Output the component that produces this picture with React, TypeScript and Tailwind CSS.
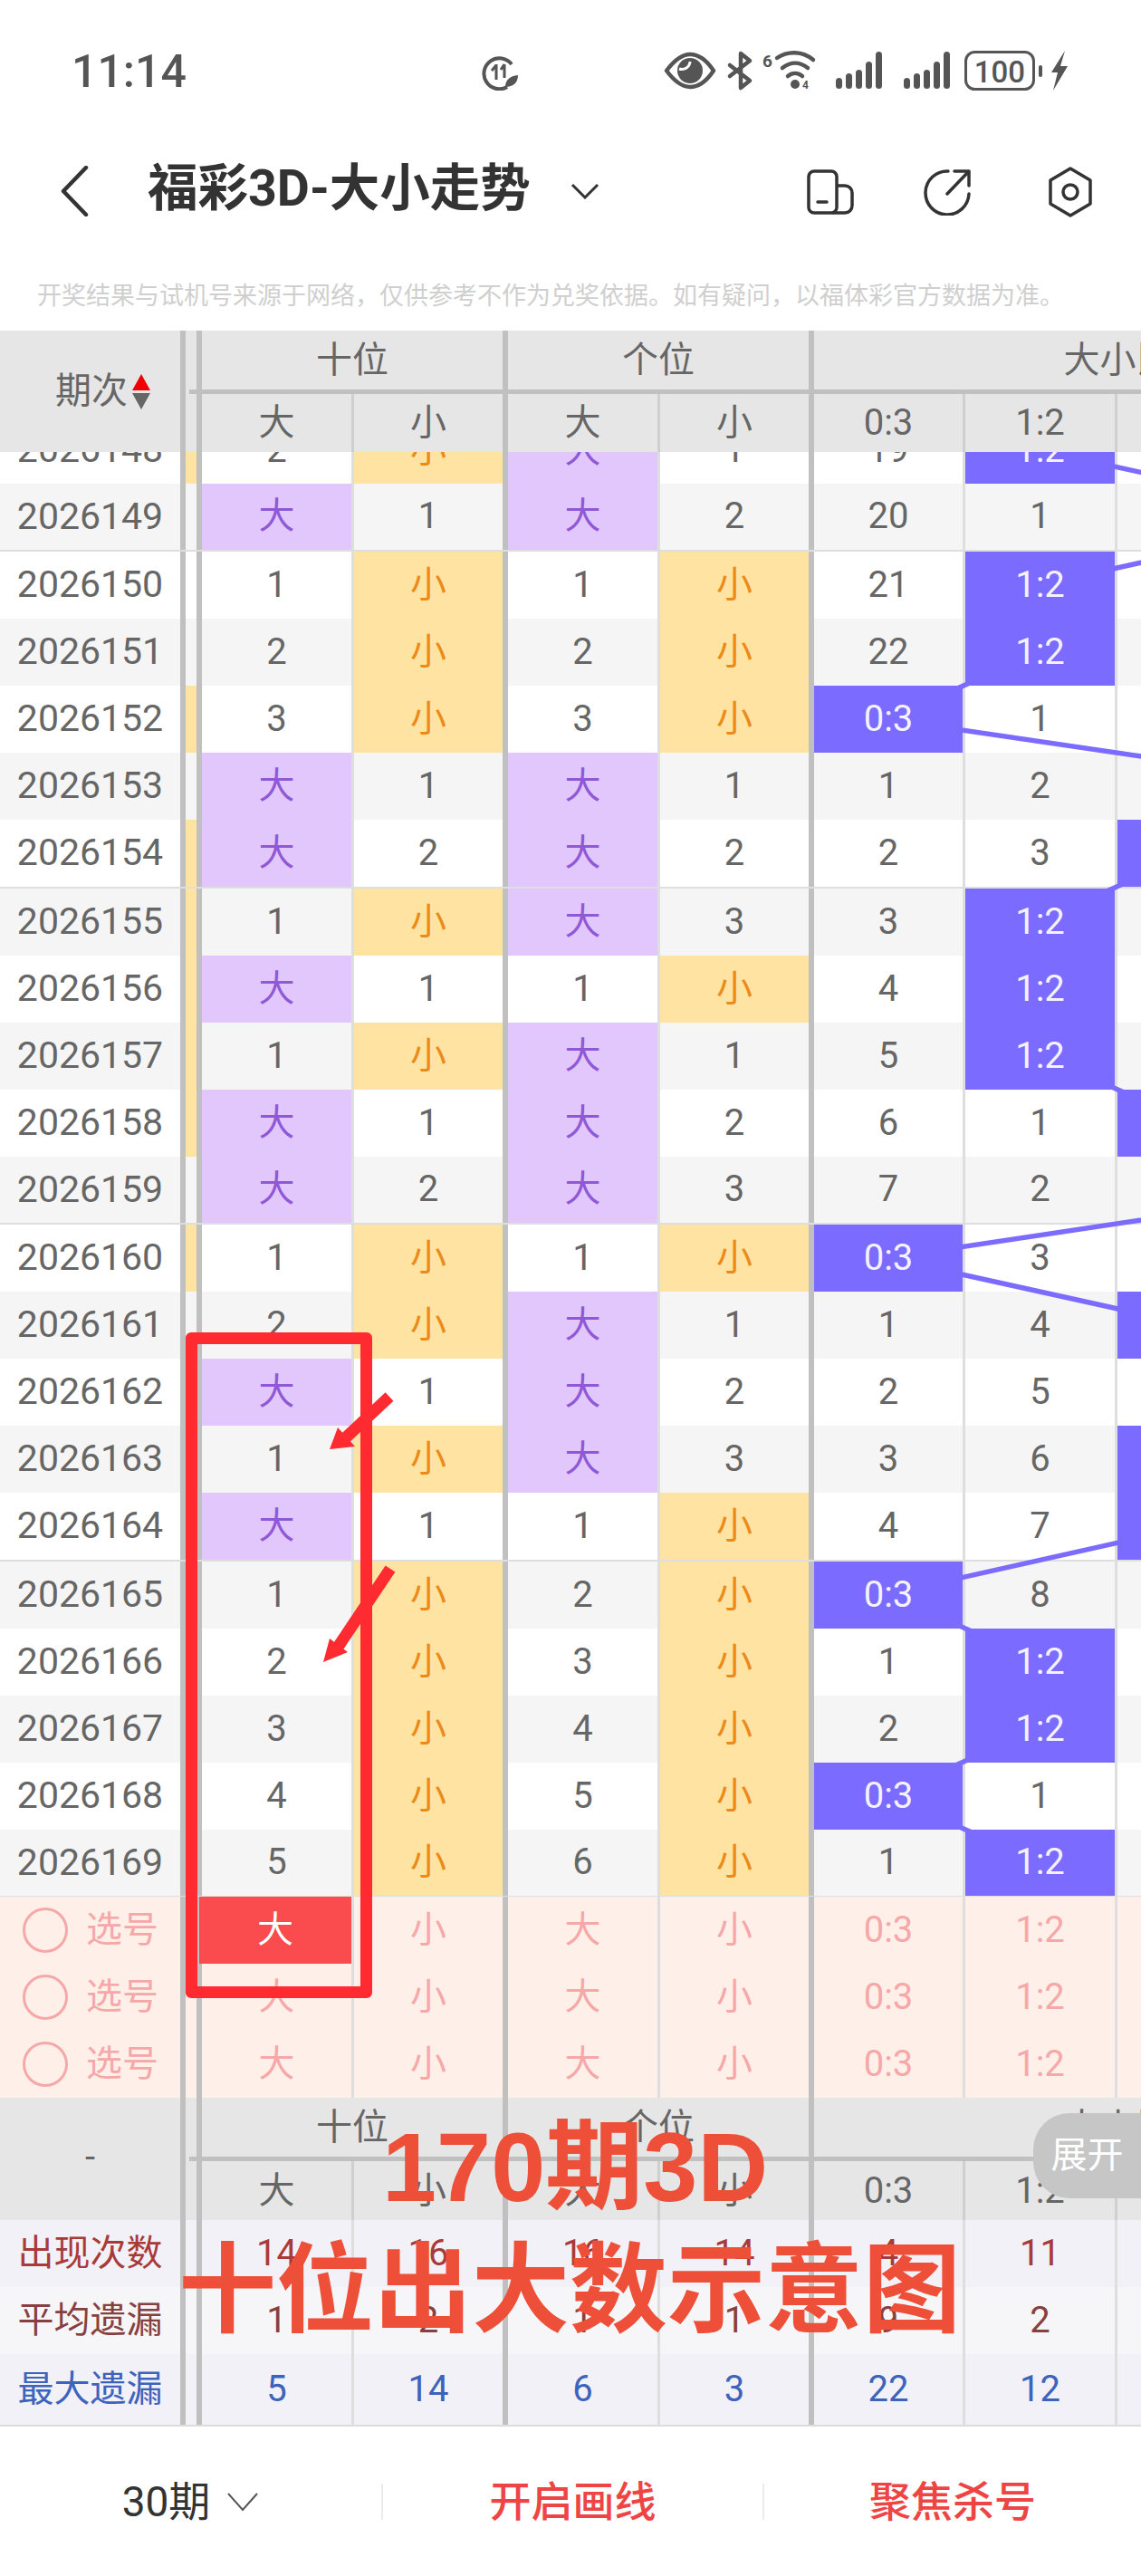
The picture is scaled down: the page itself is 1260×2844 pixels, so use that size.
import React from "react";

const ROBOTO = "font-['Roboto','Noto_Sans_CJK_SC',sans-serif]";

type Row = { id: number; strip: boolean; s: [string, string, string, string]; a: string; b: string; c: boolean };

const rows: Row[] = [
  { id: 2026148, strip: true, s: ["2", "小", "大", "1"], a: "19", b: "1:2", c: false },
  { id: 2026149, strip: false, s: ["大", "1", "大", "2"], a: "20", b: "1", c: false },
  { id: 2026150, strip: false, s: ["1", "小", "1", "小"], a: "21", b: "1:2", c: false },
  { id: 2026151, strip: false, s: ["2", "小", "2", "小"], a: "22", b: "1:2", c: false },
  { id: 2026152, strip: true, s: ["3", "小", "3", "小"], a: "0:3", b: "1", c: false },
  { id: 2026153, strip: false, s: ["大", "1", "大", "1"], a: "1", b: "2", c: false },
  { id: 2026154, strip: true, s: ["大", "2", "大", "2"], a: "2", b: "3", c: true },
  { id: 2026155, strip: true, s: ["1", "小", "大", "3"], a: "3", b: "1:2", c: false },
  { id: 2026156, strip: true, s: ["大", "1", "1", "小"], a: "4", b: "1:2", c: false },
  { id: 2026157, strip: true, s: ["1", "小", "大", "1"], a: "5", b: "1:2", c: false },
  { id: 2026158, strip: true, s: ["大", "1", "大", "2"], a: "6", b: "1", c: true },
  { id: 2026159, strip: false, s: ["大", "2", "大", "3"], a: "7", b: "2", c: false },
  { id: 2026160, strip: true, s: ["1", "小", "1", "小"], a: "0:3", b: "3", c: false },
  { id: 2026161, strip: false, s: ["2", "小", "大", "1"], a: "1", b: "4", c: true },
  { id: 2026162, strip: false, s: ["大", "1", "大", "2"], a: "2", b: "5", c: false },
  { id: 2026163, strip: false, s: ["1", "小", "大", "3"], a: "3", b: "6", c: true },
  { id: 2026164, strip: false, s: ["大", "1", "1", "小"], a: "4", b: "7", c: true },
  { id: 2026165, strip: false, s: ["1", "小", "2", "小"], a: "0:3", b: "8", c: false },
  { id: 2026166, strip: false, s: ["2", "小", "3", "小"], a: "1", b: "1:2", c: false },
  { id: 2026167, strip: false, s: ["3", "小", "4", "小"], a: "2", b: "1:2", c: false },
  { id: 2026168, strip: false, s: ["4", "小", "5", "小"], a: "0:3", b: "1", c: false },
  { id: 2026169, strip: false, s: ["5", "小", "6", "小"], a: "1", b: "1:2", c: false },
];

function Cell({ v, w }: { v: string; w: string }) {
  let cls = "text-[#666666]";
  if (v === "大") cls = "bg-[#E1C7FC] text-[#8E58D6]";
  if (v === "小") cls = "bg-[#FFE3A3] text-[#EC8A18]";
  if (v === "0:3" || v === "1:2") cls = "relative z-10 bg-[#7B6CFF] text-[#F4F2FF]";
  return <div className={`flex h-full shrink-0 items-center justify-center ${w} ${cls}`}>{v}</div>;
}

function VThick() {
  return <div className="h-full w-[6px] shrink-0 bg-[#C0C0C0]" />;
}
function VThin({ c = "bg-[#DEDEDE]" }: { c?: string }) {
  return <div className={`h-full w-[3px] shrink-0 ${c}`} />;
}

function Frozen({ strip }: { strip?: string }) {
  return (
    <>
      <VThick />
      <div className={`h-full w-[12px] shrink-0 ${strip ?? ""}`} />
      <VThick />
    </>
  );
}

function DataRow({ r, i }: { r: Row; i: number }) {
  const gray = r.id % 2 === 1;
  const groupEnd = r.id % 5 === 4;
  return (
    <div
      className={`flex w-[1600px] shrink-0 text-[40px] ${ROBOTO} ${gray ? "bg-[#F5F5F5]" : "bg-white"} ${
        groupEnd ? "h-[75.5px] border-b-[2px] border-[#DEDEDE]" : "h-[74px]"
      } ${i === 0 ? "mt-[-39.5px]" : ""}`}
    >
      <div className="flex h-full w-[199px] shrink-0 items-center justify-center text-[41px] text-[#666666]">{r.id}</div>
      <Frozen strip={r.strip ? "bg-[#FFE3A3]" : ""} />
      <Cell v={r.s[0]} w="w-[165px]" />
      <VThin />
      <Cell v={r.s[1]} w="w-[164px]" />
      <VThick />
      <Cell v={r.s[2]} w="w-[165px]" />
      <VThin />
      <Cell v={r.s[3]} w="w-[164px]" />
      <VThick />
      <Cell v={r.a} w="w-[164px]" />
      <VThin />
      <Cell v={r.b} w="w-[165px]" />
      <VThin />
      <div className={`relative z-10 h-full w-[165px] shrink-0 ${r.c ? "bg-[#7B6CFF]" : ""}`} />
    </div>
  );
}

function HeaderBlock({ left, tall }: { left: React.ReactNode; tall?: boolean }) {
  const sub = tall ? "h-[65px]" : "h-[64px]";
  return (
    <div className={`relative flex w-[1600px] shrink-0 bg-[#E6E6E6] text-[40px] text-[#666666] ${ROBOTO} ${tall ? "h-[135px]" : "h-[134px]"}`}>
      <div className="flex h-full w-[199px] shrink-0 items-center justify-center">{left}</div>
      <VThick />
      <div className="flex h-full flex-col">
        <div className="flex h-[65px]">
          <div className="w-[12px]" />
          <VThick />
          <div className="flex h-full w-[332px] items-center justify-center">十位</div>
          <VThick />
          <div className="flex h-full w-[332px] items-center justify-center">个位</div>
          <VThick />
          <div className="flex h-full w-[671px] items-center justify-center">大小比</div>
        </div>
        <div className="ml-[4px] h-[5px] w-[1390px] bg-[#C0C0C0]" />
        <div className={`flex ${sub}`}>
          <div className="w-[12px]" />
          <VThick />
          <div className="flex h-full w-[165px] items-center justify-center">大</div>
          <VThin c="bg-[#CFCFCF]" />
          <div className="flex h-full w-[164px] items-center justify-center">小</div>
          <VThick />
          <div className="flex h-full w-[165px] items-center justify-center">大</div>
          <VThin c="bg-[#CFCFCF]" />
          <div className="flex h-full w-[164px] items-center justify-center">小</div>
          <VThick />
          <div className="flex h-full w-[164px] items-center justify-center">0:3</div>
          <VThin c="bg-[#CFCFCF]" />
          <div className="flex h-full w-[165px] items-center justify-center">1:2</div>
          <VThin c="bg-[#CFCFCF]" />
          <div className="h-full w-[165px]" />
        </div>
      </div>
    </div>
  );
}

function PickRow({ active }: { active?: boolean }) {
  const c = "flex h-full shrink-0 items-center justify-center";
  return (
    <div className={`flex h-[74.3px] w-[1600px] shrink-0 bg-[#FEEFE9] text-[40px] text-[#F6A8A8] ${ROBOTO}`}>
      <div className="flex h-full w-[199px] shrink-0 items-center gap-[20px] pl-[25px]">
        <div className="h-[50px] w-[50px] shrink-0 rounded-full border-[3px] border-[#F6A8A8]" />
        <span>选号</span>
      </div>
      <Frozen />
      {active ? (
        <div className={`${c} ml-[-3px] w-[168px] bg-[#FA4B4E] text-white`}>大</div>
      ) : (
        <div className={`${c} w-[165px]`}>大</div>
      )}
      <VThin />
      <div className={`${c} w-[164px]`}>小</div>
      <VThick />
      <div className={`${c} w-[165px]`}>大</div>
      <VThin />
      <div className={`${c} w-[164px]`}>小</div>
      <VThick />
      <div className={`${c} w-[164px]`}>0:3</div>
      <VThin />
      <div className={`${c} w-[165px]`}>1:2</div>
      <VThin />
      <div className={`${c} w-[165px]`} />
    </div>
  );
}

function StatRow({ label, vals, color, bg, h }: { label: string; vals: string[]; color: string; bg: string; h: string }) {
  const c = "flex h-full shrink-0 items-center justify-center";
  return (
    <div className={`flex w-[1600px] shrink-0 text-[40px] ${ROBOTO} ${color} ${bg} ${h}`}>
      <div className={`${c} w-[199px] text-[40px]`}>{label}</div>
      <Frozen />
      <div className={`${c} w-[165px]`}>{vals[0]}</div>
      <VThin />
      <div className={`${c} w-[164px]`}>{vals[1]}</div>
      <VThick />
      <div className={`${c} w-[165px]`}>{vals[2]}</div>
      <VThin />
      <div className={`${c} w-[164px]`}>{vals[3]}</div>
      <VThick />
      <div className={`${c} w-[164px]`}>{vals[4]}</div>
      <VThin />
      <div className={`${c} w-[165px]`}>{vals[5]}</div>
      <VThin />
      <div className={`${c} w-[165px]`} />
    </div>
  );
}

function TrendLines() {
  const xs = [980, 1148, 1316, 1486];
  const pts: [number, number][] = [
    [1, 497], [3, 571], [1, 646], [1, 720], [0, 794], [3, 868], [2, 942], [1, 1017], [1, 1091], [1, 1165],
    [2, 1239], [3, 1313], [0, 1389], [2, 1463], [3, 1537], [2, 1611], [2, 1685], [0, 1760], [1, 1834], [1, 1908],
    [0, 1982], [1, 2056],
  ];
  const d = pts.map(([c, y]) => `${xs[c]},${y - 499}`).join(" ");
  return (
    <svg className="absolute left-0 top-0 z-[5]" width="1600" height="1595" aria-hidden="true">
      <polyline points={d} fill="none" stroke="#7B6CFF" strokeWidth="5.5" />
    </svg>
  );
}

function StatusIcons() {
  return (
    <svg width="450" height="60" viewBox="0 0 450 60" fill="none" className="shrink-0">
      <path d="M3 28 C12 16 20 10 29 10 C38 10 47 16 55 28 C47 40 38 46 29 46 C20 46 12 40 3 28Z" stroke="#555" strokeWidth="4.5" strokeLinejoin="round" />
      <circle cx="29" cy="28" r="14" fill="#555" />
      <path d="M17 26a9 9 0 0 0 12-8" stroke="#fff" strokeWidth="3" />
      <path d="M73 22 L95 39 L85 47 L85 9 L95 17 L73 34" stroke="#555" strokeWidth="4.5" strokeLinejoin="round" strokeLinecap="round" />
      <text x="109" y="24" fontSize="19" fontWeight="700" fill="#555" fontFamily="Roboto, sans-serif">6</text>
      <path d="M125 14 C137 6 153 6 165 16 M131 25 C140 18 150 18 159 25 M137 34 C142 30 148 30 153 34" stroke="#555" strokeWidth="4.5" strokeLinecap="round" />
      <circle cx="145" cy="43" r="5" fill="#555" />
      <text x="153" y="48" fontSize="12" fontWeight="700" fill="#555" fontFamily="Roboto, sans-serif">4</text>
      {[0, 75].map((dx) => (
        <g key={dx} fill="#555">
          <rect x={190 + dx} y="36" width="7" height="12" rx="3.5" />
          <rect x={201 + dx} y="31" width="7" height="17" rx="3.5" />
          <rect x={212 + dx} y="27" width="7" height="21" rx="3.5" />
          <rect x={223 + dx} y="18" width="7" height="30" rx="3.5" />
          <rect x={234 + dx} y="7" width="7" height="41" rx="3.5" />
        </g>
      ))}
      <rect x="333.5" y="7.5" width="75" height="41" rx="10" stroke="#555" strokeWidth="3" />
      <text x="371" y="41" textAnchor="middle" fontSize="33" fontWeight="500" fill="#555" fontFamily="Roboto, sans-serif">100</text>
      <rect x="414" y="22" width="4" height="13" rx="2" fill="#555" />
      <path d="M443 6 L428 30 H435 L430 50 L446 23 H438 Z" fill="#555" />
    </svg>
  );
}

export default function App() {
  return (
    <div className={`relative h-[2844px] w-[1260px] overflow-hidden bg-white ${ROBOTO}`}>
      {/* status bar */}
      <div className="flex h-[144px] items-start">
        <div className="ml-[79px] mt-[50px] w-[130px] text-[50px] font-medium leading-[58px] text-[#555555]">11:14</div>
        <svg width="46" height="42" viewBox="0 0 46 42" fill="none" className="ml-[321px] mt-[58px]">
          <path d="M30 38 A17 17 0 1 1 35 13" stroke="#555" strokeWidth="4" />
          <path d="M18 14 L13 20 M18 13 V30 M27 13 V28 M27 13 L23 19" stroke="#555" strokeWidth="3" />
          <path d="M28 38 C28 30 33 26 42 25 C42 33 37 38 28 38Z" fill="#555" />
        </svg>
        <div className="ml-[157px] mt-[50px] flex">
          <StatusIcons />
        </div>
      </div>

      {/* title bar */}
      <div className="flex h-[131px] items-start">
        <svg width="32" height="56" viewBox="0 0 32 56" fill="none" className="ml-[66px] mt-[39px]">
          <path d="M29 2 L4 28 L29 54" stroke="#333" strokeWidth="4.5" strokeLinecap="round" strokeLinejoin="round" />
        </svg>
        <div className="ml-[65px] mt-[30px] w-[421px] whitespace-nowrap text-[55.5px] font-bold leading-[70px] text-[#333333]">福彩3D-大小走势</div>
        <svg width="32" height="18" viewBox="0 0 32 18" fill="none" className="ml-[46px] mt-[58px]">
          <path d="M2 2 L16 16 L30 2" stroke="#333" strokeWidth="3" />
        </svg>
        <svg width="52" height="50" viewBox="0 0 52 50" fill="none" className="ml-[229px] mt-[43px]">
          <rect x="2" y="2" width="31" height="46" rx="6" stroke="#333" strokeWidth="3.5" />
          <path d="M33 18 H42 a8 8 0 0 1 8 8 V40 a8 8 0 0 1 -8 8 H28" stroke="#333" strokeWidth="3.5" />
          <path d="M12 36 H22" stroke="#333" strokeWidth="3.5" strokeLinecap="round" />
        </svg>
        <svg width="52" height="52" viewBox="0 0 52 52" fill="none" className="ml-[77px] mt-[42px]">
          <path d="M27 3 A24 24 0 1 0 50 28" stroke="#333" strokeWidth="3.5" strokeLinecap="round" />
          <path d="M34 3 H50 V19 M50 3 L26 28" stroke="#333" strokeWidth="3.5" strokeLinecap="round" strokeLinejoin="round" />
        </svg>
        <svg width="50" height="56" viewBox="0 0 50 56" fill="none" className="ml-[85px] mt-[40px]">
          <path d="M25 2 L47 15 V41 L25 54 L3 41 V15 Z" stroke="#333" strokeWidth="3.5" strokeLinejoin="round" />
          <circle cx="25" cy="28" r="8" stroke="#333" strokeWidth="3.5" />
        </svg>
      </div>

      {/* notice */}
      <div className="flex h-[90px] items-start whitespace-nowrap pl-[41px] pt-[37px] text-[27px] leading-[30px] text-[#CFCFCF]">
        开奖结果与试机号来源于网络，仅供参考不作为兑奖依据。如有疑问，以福体彩官方数据为准。
      </div>

      {/* top header */}
      <HeaderBlock
        left={
          <div className="flex items-center gap-[5px] pl-[28px]">
            <span className="whitespace-nowrap">期次</span>
            <span className="flex flex-col gap-[3px]">
              <span className="h-0 w-0 border-x-[10px] border-b-[18px] border-x-transparent border-b-[#F00000]" />
              <span className="h-0 w-0 border-x-[10px] border-t-[18px] border-x-transparent border-t-[#666666]" />
            </span>
          </div>
        }
      />

      {/* scrolled body */}
      <div className="relative h-[1594.5px] w-[1600px] overflow-hidden">
        <div className="relative flex flex-col">
          {rows.map((r, i) => (
            <DataRow key={r.id} r={r} i={i} />
          ))}
          <TrendLines />
        </div>
      </div>

      {/* pick rows */}
      <div className="flex flex-col">
        <PickRow active />
        <PickRow />
        <PickRow />
      </div>

      {/* bottom header */}
      <HeaderBlock tall left={<span className="pb-[4px]">-</span>} />

      {/* stats */}
      <StatRow label="出现次数" vals={["14", "16", "16", "14", "4", "11"]} color="text-[#A93A3A]" bg="bg-[#F1F1F7]" h="h-[74px]" />
      <StatRow label="平均遗漏" vals={["1", "2", "1", "1", "9", "2"]} color="text-[#864040]" bg="bg-[#F6F6F8]" h="h-[74px]" />
      <StatRow label="最大遗漏" vals={["5", "14", "6", "3", "22", "12"]} color="text-[#3D63BD]" bg="bg-[#F1F1F7]" h="h-[78px]" />

      {/* bottom bar */}
      <div className="flex h-[167px] items-center border-t-[2px] border-[#DCDCDC] text-[46px] font-medium leading-[60px]">
        <div className="flex w-[421px] items-center justify-center gap-[18px] font-normal text-[#333333]">
          <span>30期</span>
          <svg width="36" height="22" viewBox="0 0 36 22" fill="none">
            <path d="M2 2 L18 20 L34 2" stroke="#555" strokeWidth="2" />
          </svg>
        </div>
        <div className="h-[40px] w-[2px] bg-[#EBEBEB]" />
        <div className="flex w-[419px] justify-center text-[#EF4444]">开启画线</div>
        <div className="h-[40px] w-[2px] bg-[#EBEBEB]" />
        <div className="flex w-[416px] justify-center text-[#EF4444]">聚焦杀号</div>
      </div>

      {/* expand pill */}
      <div className="absolute left-[1141px] top-[2333px] flex h-[94px] w-[119px] items-center justify-center rounded-l-[40px] bg-[#C6C6C6] text-[40px] text-white">
        展开
      </div>

      {/* annotations */}
      <div className="absolute left-[205px] top-[1471px] h-[735px] w-[206px] rounded-[6px] border-[13px] border-[#FF2B30]" />
      <svg className="absolute left-[340px] top-[1520px]" width="110" height="340" viewBox="0 0 110 340" aria-hidden="true">
        <path d="M90 22 L41 68" stroke="#FF2B30" strokeWidth="13" fill="none" />
        <path d="M24 80 L33 56 L52 77 Z" fill="#FF2B30" />
        <path d="M91 212 L32 300" stroke="#FF2B30" strokeWidth="13" fill="none" />
        <path d="M17 315 L24 289 L44 304 Z" fill="#FF2B30" />
      </svg>

      {/* overlay caption */}
      <div className="absolute left-[422px] top-[2333px] whitespace-nowrap font-['Liberation_Sans','Noto_Sans_CJK_SC',sans-serif] text-[108px] font-bold leading-[120px] text-[#EE4F38]">
        170期3D
      </div>
      <div className="absolute left-[197px] top-[2459px] whitespace-nowrap font-['Noto_Sans_CJK_SC',sans-serif] text-[108px] font-bold leading-[120px] text-[#EE4F38]">
        十位出大数示意图
      </div>
    </div>
  );
}
